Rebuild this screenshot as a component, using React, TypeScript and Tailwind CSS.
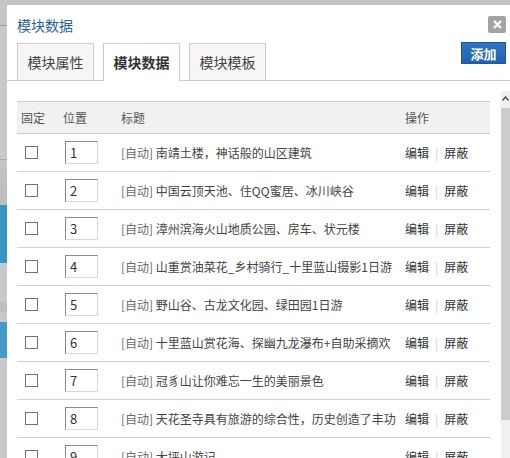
import React from "react";

const rows = [
    "南靖土楼，神话般的山区建筑",
    "中国云顶天池、住QQ蜜居、冰川峡谷",
    "漳州滨海火山地质公园、房车、状元楼",
    "山重赏油菜花_乡村骑行_十里蓝山摄影1日游",
    "野山谷、古龙文化园、绿田园1日游",
    "十里蓝山赏花海、探幽九龙瀑布+自助采摘欢",
    "冠豸山让你难忘一生的美丽景色",
    "天花圣寺具有旅游的综合性，历史创造了丰功",
    "大坪山游记",
];

const font = { fontFamily: '"Noto Sans CJK SC", "Liberation Sans", sans-serif' };

export default function App() {
    return (
        <div className="w-[510px] h-[458px] overflow-hidden flex bg-[#c4c4c4] pt-[5px]" style={font}>
            {/* page behind the dialog, only a sliver shows */}
            <div className="w-[7px] flex flex-col shrink-0">
                <div className="h-[20px] bg-[#c6c6c6]" />
                <div className="h-px bg-[#9a9a9a]" />
                <div className="h-[133px] bg-[#c9c9c9]" />
                <div className="h-px bg-[#a8a8a8]" />
                <div className="h-[45px] bg-gradient-to-b from-[#c4c4c4] to-[#bdbdbd]" />
                <div className="h-[58px] bg-[#3a94c6]" />
                <div className="h-[10px] bg-[#c2cad2]" />
                <div className="h-[29px] bg-[#c9c9c9]" />
                <div className="h-[10px] bg-[#b9c0c8]" />
                <div className="h-[10px] bg-[#c9c9c9]" />
                <div className="h-[36px] bg-[#4399c9]" />
                <div className="flex-1 bg-[#c9c9c9]" />
            </div>

            <div className="flex-1 bg-white flex flex-col min-w-0">
                <div className="relative h-[38px] px-[10px] pt-[10px]">
                    <div className="text-[14px] leading-[20px] text-[#2d5f9a]">模块数据</div>
                    <button className="absolute right-[4px] top-[11px] w-[18px] h-[17px] rounded-[2px] bg-[#a3a3a3] flex items-center justify-center">
                        <svg width="9" height="9" viewBox="0 0 9 9">
                            <path d="M1 1 L8 8 M8 1 L1 8" stroke="#fff" strokeWidth="2.2" />
                        </svg>
                    </button>
                </div>

                <div className="relative h-[38px] flex items-end gap-[9px] px-[10px] border-b border-[#cccccc]">
                    <div className="w-[77px] h-[37px] border border-b-0 border-[#cccccc] bg-[#f6f6f6] text-[14px] text-[#444] flex items-center justify-center">
                        模块属性
                    </div>
                    <div className="w-[77px] h-[38px] -mb-px border border-b-0 border-[#cccccc] bg-white text-[14px] font-bold text-[#333] flex items-center justify-center pb-px">
                        模块数据
                    </div>
                    <div className="w-[77px] h-[37px] border border-b-0 border-[#cccccc] bg-[#f6f6f6] text-[14px] text-[#444] flex items-center justify-center">
                        模块模板
                    </div>
                    <button className="absolute right-[4px] top-[-1px] w-[45px] h-[22px] border border-[#1d58a0] bg-gradient-to-b from-[#2f75c2] to-[#2261ad] text-white text-[13px] font-bold leading-none">
                        添加
                    </button>
                </div>

                <div className="h-[10px] shrink-0" />

                <div className="flex flex-1 min-h-0">
                    <div className="flex-1 pl-[10px] pr-[11px] pt-[10px] overflow-hidden">
                        <div className="flex h-[33px] items-center bg-[#f1f1f1] border-y border-[#cccccc] text-[12px] text-[#555]">
                            <div className="w-[42px] pl-[4px]">固定</div>
                            <div className="w-[58px] pl-[4px]">位置</div>
                            <div className="w-[284px] pl-[4px]">标题</div>
                            <div className="pl-[4px]">操作</div>
                        </div>
                        {rows.map((title, i) => (
                            <div key={i} className="flex h-[38px] items-center border-b border-[#d0d0d0] text-[12px]">
                                <div className="w-[42px] pl-[8px]">
                                    <div className="w-[13px] h-[13px] border border-[#707070] bg-white" />
                                </div>
                                <div className="w-[58px] pl-[6px]">
                                    <div className="w-[33px] h-[23px] border border-t-[#8a8a8a] border-l-[#8a8a8a] border-r-[#d8d8d8] border-b-[#d8d8d8] bg-white pl-[4px] text-[13px] leading-[21px] text-[#333]">
                                        {i + 1}
                                    </div>
                                </div>
                                <div className="w-[284px] pl-[4px] whitespace-nowrap overflow-hidden">
                                    <span className="text-[#6a6a6a]">[自动]</span>
                                    <span className="text-[#444]"> {title}</span>
                                </div>
                                <div className="pl-[4px] flex items-center text-[#333] whitespace-nowrap">
                                    <span>编辑</span>
                                    <span className="mx-[6px] text-[#c7d6e6]">|</span>
                                    <span>屏蔽</span>
                                </div>
                            </div>
                        ))}
                    </div>

                    <div className="w-[9px] flex flex-col shrink-0">
                        <div className="h-[17px] bg-[#f0f0f0] flex items-start justify-center pt-[5px]">
                            <svg width="7" height="5" viewBox="0 0 7 5">
                                <path d="M0.5 4.5 L3.5 1 L6.5 4.5" stroke="#505050" strokeWidth="1.5" fill="none" />
                            </svg>
                        </div>
                        <div className="h-[312px] bg-[#cdcdcd]" />
                        <div className="flex-1 bg-[#f0f0f0]" />
                    </div>
                </div>
            </div>
        </div>
    );
}
